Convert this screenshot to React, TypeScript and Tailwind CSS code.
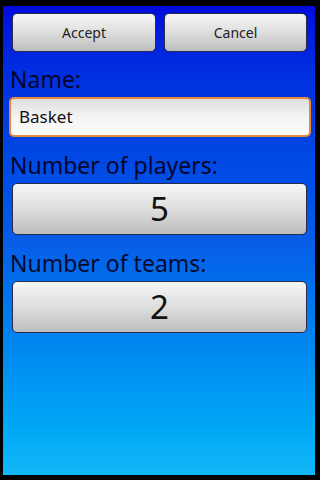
import React from "react";

const font = { fontFamily: '"Noto Sans", "Open Sans", sans-serif' };

function GrayButton({ children, className }: { children: React.ReactNode; className: string }) {
  return (
    <div
      className={`flex items-center justify-center rounded-[5px] border border-[#2a2a4a] bg-gradient-to-b from-[#f6f6f6] via-[#dedede] to-[#bdbdbd] text-[#111] ${className}`}
    >
      {children}
    </div>
  );
}

export default function App() {
  return (
    <div className="w-[320px] h-[480px] bg-black pt-[6px] pl-[3px] pr-[5px] pb-[5px]" style={font}>
      <div className="w-full h-full flex flex-col bg-gradient-to-b from-[#0208dc] via-[#0a5ce8] to-[#12b8f8]">
        <div className="flex gap-[8px] mt-[7px] ml-[9px] mr-[8px]">
          <GrayButton className="w-[144px] h-[39px] text-[14px] text-[#222]">Accept</GrayButton>
          <GrayButton className="w-[143px] h-[39px] text-[14px] text-[#222]">Cancel</GrayButton>
        </div>
        <div className="mt-[12px] ml-[7px] h-[30px] leading-[30px] text-[23px] text-[#03052c]">Name:</div>
        <div className="mt-[3px] ml-[6px] mr-[4px] h-[40px] rounded-[5px] border-[2px] border-[#e8883a] bg-gradient-to-b from-[#dedede] via-[#f4f4f4] to-[#fbfbfb] flex items-center pl-[8px] text-[17px] text-[#111]">
          Basket
        </div>
        <div className="mt-[13px] ml-[7px] h-[30px] leading-[30px] text-[23px] text-[#03052c]">Number of players:</div>
        <GrayButton className="mt-[3px] ml-[9px] mr-[8px] h-[52px] text-[33px]">5</GrayButton>
        <div className="mt-[13px] ml-[7px] h-[30px] leading-[30px] text-[23px] text-[#040a30]">Number of teams:</div>
        <GrayButton className="mt-[3px] ml-[9px] mr-[8px] h-[52px] text-[33px]">2</GrayButton>
      </div>
    </div>
  );
}
